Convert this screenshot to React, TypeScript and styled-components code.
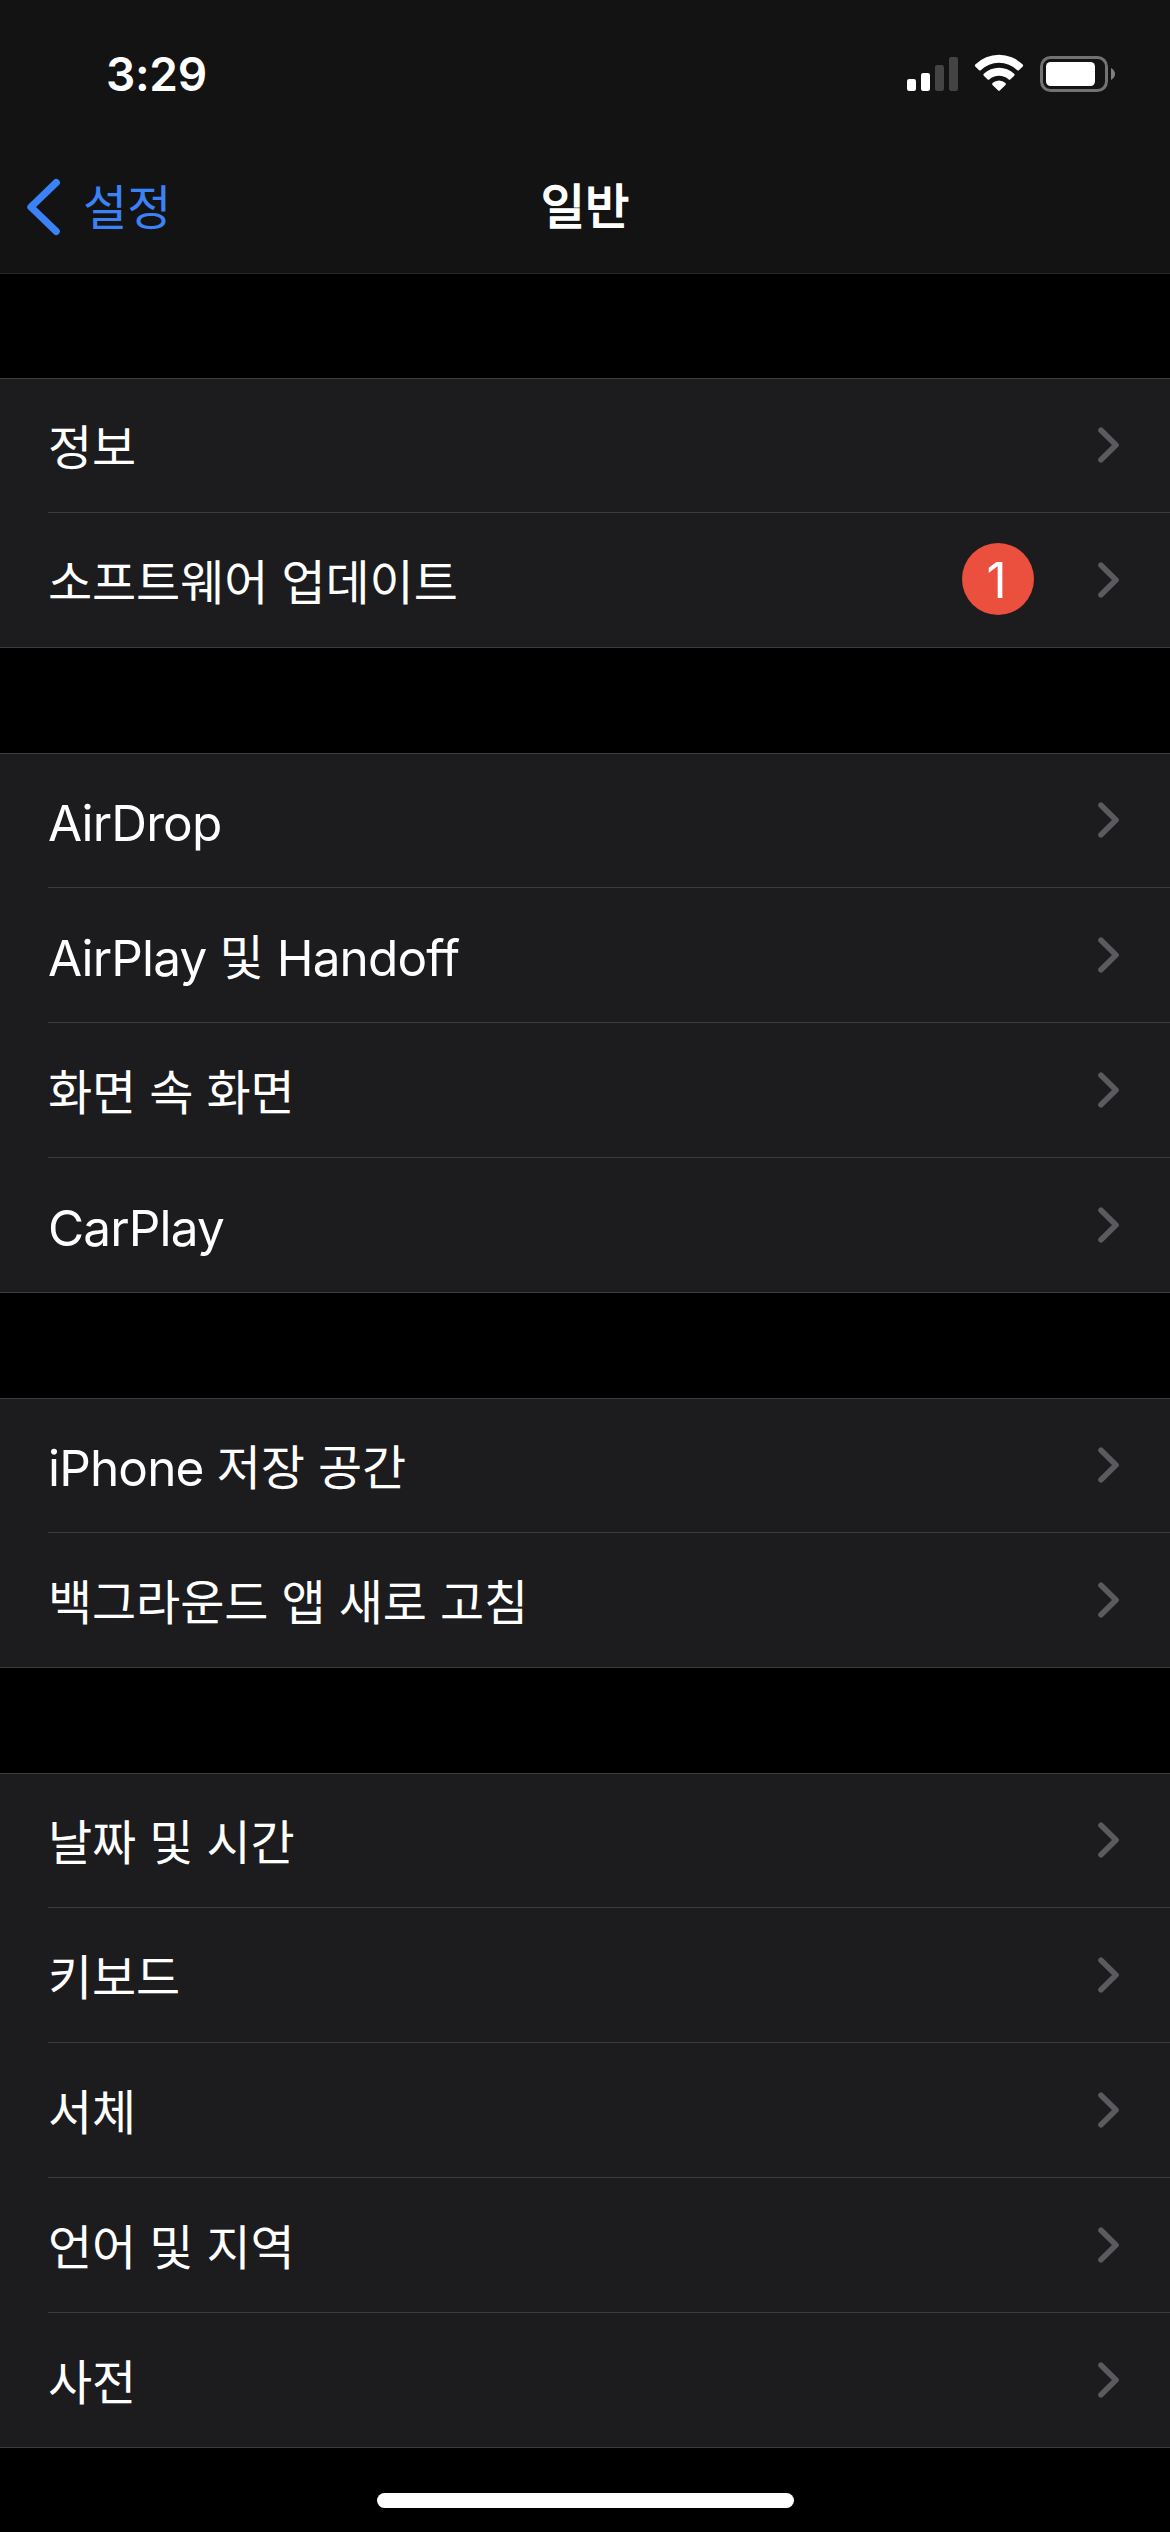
import React from "react";
import styled, { createGlobalStyle } from "styled-components";

const GlobalStyle = createGlobalStyle`
  * { box-sizing: border-box; }
  body {
    margin: 0;
    background: #000;
    color: #fff;
    -webkit-font-smoothing: antialiased;
  }
`;

const Screen = styled.main`
  display: flex;
  flex-direction: column;
  width: 1170px;
  height: 2532px;
  overflow: hidden;
  background: #000;
`;

const Header = styled.header`
  height: 274px;
  background: #131313;
  border-bottom: 1px solid #272728;
`;

const StatusBar = styled.div`
  display: flex;
  justify-content: space-between;
  align-items: center;
  height: 141px;
  padding: 7px 53px 0 106px;
`;

const Time = styled.time`
  font: 600 46px/56px Inter, "Liberation Sans", sans-serif;
  letter-spacing: -0.3px;
`;

const NavBar = styled.nav`
  display: grid;
  grid-template-columns: 1fr auto 1fr;
  align-items: center;
  height: 132px;
  padding: 0 26px;
`;

const BackLink = styled.a`
  display: flex;
  align-items: center;
  gap: 23px;
  color: #3b82f7;
`;

const NavText = styled.span`
  margin-top: -6px;
  font: 400 48px/72px "Noto Sans CJK KR", sans-serif;
`;

const Title = styled.h1`
  margin: -8px 0 0;
  font: 400 48px/72px "Noto Sans CJK KR", sans-serif;
  -webkit-text-stroke: 1.7px #fff;
`;

const Groups = styled.div`
  display: flex;
  flex-direction: column;
  gap: 105px;
  padding-top: 104px;
`;

const Group = styled.ul`
  margin: 0;
  padding: 0;
  list-style: none;
  background: linear-gradient(#3c3c3f, #3c3c3f) top / 100% 1px no-repeat,
    linear-gradient(#3c3c3f, #3c3c3f) bottom / 100% 1px no-repeat, #1c1c1e;
`;

const Row = styled.li`
  display: flex;
  align-items: center;
  height: 135px;
  margin-left: 48px;
  padding-right: 50px;
  border-bottom: 1px solid #3c3c3f;
  &:last-child {
    border-bottom-color: transparent;
  }
`;

const Label = styled.span`
  flex: 1;
  padding-top: 6px;
  font: 400 49.5px/72px Inter, "Liberation Sans", sans-serif;
  font-feature-settings: "calt" 0, "liga" 0;
  letter-spacing: -0.85px;
  white-space: pre;
`;

const Hangul = styled.span`
  font: 400 48px/0 "Noto Sans CJK KR", sans-serif;
  letter-spacing: -0.1px;
  word-spacing: 2.5px;
  vertical-align: 1px;
`;

const Badge = styled.span`
  width: 72px;
  height: 72px;
  margin: -2px 64px 0 0;
  padding-right: 3px;
  border-radius: 50%;
  background: #eb4f3d;
  font: 400 49.5px/74px Inter, "Liberation Sans", sans-serif;
  text-align: center;
`;

const HomeArea = styled.footer`
  display: flex;
  justify-content: center;
  margin-top: auto;
  padding-bottom: 24px;
`;

const HomeIndicator = styled.div`
  width: 417px;
  height: 15px;
  border-radius: 7.5px;
  background: #fff;
`;

const StatusIcons = () => (
  <svg width="212" height="40" viewBox="905 54 212 40" fill="#fff">
    <rect x="907" y="79" width="9" height="12" rx="2.2" />
    <rect x="921" y="73" width="9" height="18" rx="2.2" />
    <rect x="935" y="65" width="9" height="26" rx="2.2" fill="#444" />
    <rect x="949" y="57" width="9" height="34" rx="2.2" fill="#444" />
    <path d="M975.3 64.6A33.5 33.5 0 0 1 1022.7 64.6Q1023.6 65.5 1022.7 66.4L1018.9 70.2Q1018.2 70.9 1017.3 70.2A26.2 26.2 0 0 0 980.7 70.2Q979.8 70.9 979.1 70.2L975.3 66.4Q974.4 65.5 975.3 64.6Z" />
    <path d="M983.8 73.8A22 22 0 0 1 1014.2 73.8Q1015.2 74.8 1014.2 75.8L1010.3 79.5Q1009.5 80.2 1008.7 79.5A14.6 14.6 0 0 0 989.3 79.5Q988.5 80.2 987.7 79.5L983.8 75.8Q982.8 74.8 983.8 73.8Z" />
    <path d="M992.5 83A9.6 9.6 0 0 1 1005.5 83Q1006.3 84 1005.5 84.9L999.8 90.6Q999 91.3 998.2 90.6L992.5 84.9Q991.7 84 992.5 83Z" />
    <rect x="1041.5" y="57.5" width="65" height="33" rx="9" fill="none" stroke="#727272" strokeWidth="3" />
    <rect x="1046" y="62" width="49" height="24" rx="4.5" />
    <path d="M1111 68Q1115 70.5 1115 74T1111 80Z" fill="#808080" />
  </svg>
);

const BackIcon = () => (
  <svg width="34" height="58" viewBox="26 178 34 58" fill="none" stroke="currentColor" strokeWidth="7.2" strokeLinecap="round" strokeLinejoin="round">
    <path d="M56.2 182.6L30.9 207L56.2 231.4" />
  </svg>
);

const Chevron = () => (
  <svg width="22" height="38" viewBox="1098 426 22 38" fill="none" stroke="#5b5b5f" strokeWidth="5.6" strokeLinecap="round" strokeLinejoin="round">
    <path d="M1101 430.2L1116 445L1101 459.8" />
  </svg>
);

// Hangul runs get their own face and size, set on the line of the Latin text.
const MixedText = ({ text }: { text: string }) => (
  <Label>
    {(text.match(/[A-Za-z]+|[^A-Za-z]+/g) ?? []).map((run, i) =>
      /[A-Za-z]/.test(run) ? run : <Hangul key={i}>{run}</Hangul>
    )}
  </Label>
);

type Item = { label: string; badge?: number };

const groups: Item[][] = [
  [{ label: "정보" }, { label: "소프트웨어 업데이트", badge: 1 }],
  [{ label: "AirDrop" }, { label: "AirPlay 및 Handoff" }, { label: "화면 속 화면" }, { label: "CarPlay" }],
  [{ label: "iPhone 저장 공간" }, { label: "백그라운드 앱 새로 고침" }],
  [{ label: "날짜 및 시간" }, { label: "키보드" }, { label: "서체" }, { label: "언어 및 지역" }, { label: "사전" }],
];

export default function App() {
  return (
    <>
      <GlobalStyle />
      <Screen>
        <Header>
          <StatusBar>
            <Time>3:29</Time>
            <StatusIcons />
          </StatusBar>
          <NavBar>
            <BackLink>
              <BackIcon />
              <NavText>설정</NavText>
            </BackLink>
            <Title>일반</Title>
          </NavBar>
        </Header>
        <Groups>
          {groups.map((items, i) => (
            <Group key={i}>
              {items.map((item) => (
                <Row key={item.label}>
                  <MixedText text={item.label} />
                  {item.badge && <Badge>{item.badge}</Badge>}
                  <Chevron />
                </Row>
              ))}
            </Group>
          ))}
        </Groups>
        <HomeArea>
          <HomeIndicator />
        </HomeArea>
      </Screen>
    </>
  );
}
